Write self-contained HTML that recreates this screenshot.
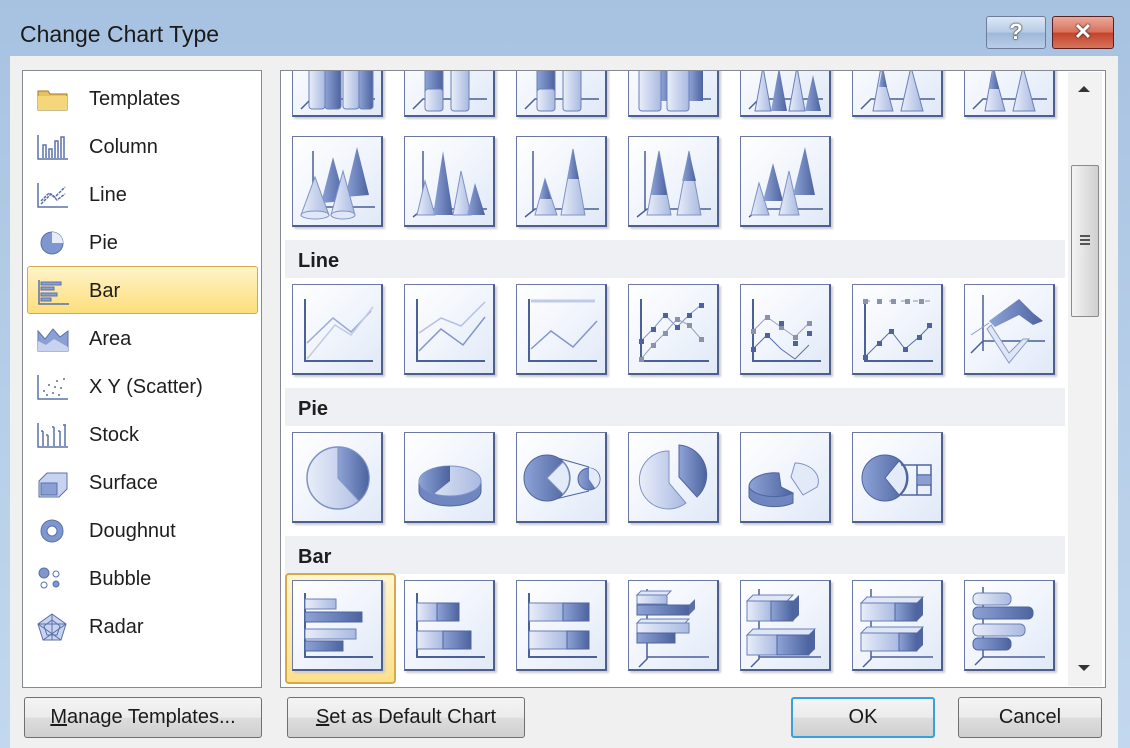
<!DOCTYPE html>
<html><head><meta charset="utf-8">
<style>
*{margin:0;padding:0;box-sizing:border-box}
body{width:1130px;height:748px;overflow:hidden;background:linear-gradient(#a7c2e1,#c3d8ee);font-family:"Liberation Sans",sans-serif;position:relative}
.abs{position:absolute}
#title{left:20px;top:21px;font-size:23px;color:#1a1a1a}
#body{left:10px;top:56px;width:1108px;height:692px;background:#f0f0f0}
#list{left:22px;top:70px;width:240px;height:618px;background:#fff;border:1px solid #858a92}
.it{position:absolute;left:4px;width:231px;height:48px;font-size:20px;color:#1e1e1e}
.it span{position:absolute;left:62px;top:14px}
.it svg{position:absolute;left:8px;top:9px}
.sel{background:linear-gradient(#fff4c8,#fdde7c);border:1px solid #d6aa4a;border-radius:3px}
.sel span{left:61px;top:13px}
#pane{left:280px;top:70px;width:826px;height:618px;background:#fff;border:1px solid #858a92;overflow:hidden}
.t{position:absolute;width:91px;height:91px;border:1px solid #6a78a3;border-right:2px solid #4e5e8e;border-bottom:2px solid #4e5e8e;background:linear-gradient(135deg,#fff 0%,#f1f5fc 50%,#e0e9f8 100%);box-shadow:2px 2px 2px #c9ccd2}
.t svg{position:absolute;left:0;top:0}
.hd{position:absolute;left:5px;width:780px;height:38px;background:#eef0f3;font-weight:bold;font-size:20px;color:#1e1e1e;padding:10px 0 0 13px}
.btn{position:absolute;height:41px;border:1px solid #707070;border-radius:3px;background:linear-gradient(#f4f4f4 0%,#ebebeb 50%,#dddddd 51%,#cfcfcf 100%);font-size:20px;color:#1a1a1a;text-align:center;line-height:38px}
#sb{left:1068px;top:72px;width:34px;height:614px;background:#f2f2f2}
</style></head><body>
<div class="abs" id="title">Change Chart Type</div>
<div class="abs" style="left:986px;top:16px;width:60px;height:33px;border:1px solid #6d7d99;border-radius:3px;background:linear-gradient(#dbe7f5,#b6cbe6 50%,#9fb7d8 51%,#b9cde8);color:#fff;font-weight:bold;font-size:22px;text-align:center;line-height:30px;text-shadow:0 0 2px #222,0 0 1px #222">?</div>
<div class="abs" style="left:1052px;top:16px;width:62px;height:33px;border:1px solid #5a2020;border-radius:3px;background:linear-gradient(#e9a99a,#d8705a 50%,#c3422a 51%,#d6745c);color:#fff;font-weight:bold;font-size:22px;text-align:center;line-height:30px;text-shadow:0 0 2px #222,0 0 1px #222">✕</div>
<div class="abs" id="body"></div>

<div class="abs" id="list">
<div class="it" style="top:3px"><svg width="34" height="32"><path d="M3 8h10l2 3h17v16H3z" fill="#e8c35c" stroke="#9a7a2a"/><path d="M3 13h29v14H3z" fill="#f4d77a"/></svg><span>Templates</span></div>
<div class="it" style="top:51px"><svg width="34" height="32" fill="none" stroke="#5a70a8" stroke-width="1.5"><path d="M3 4v24h30"/><path d="M8 27V14h3v13M14 27V18h3v9M20 27V10h3v17M26 27V6h3v21"/></svg><span>Column</span></div>
<div class="it" style="top:99px"><svg width="34" height="32" fill="none" stroke="#5a70a8" stroke-width="1.5"><path d="M3 4v24h30"/><path d="M6 22l8-8 6 4 10-10M6 25l10-10 6 6 8-6" stroke-dasharray="3 1"/></svg><span>Line</span></div>
<div class="it" style="top:147px"><svg width="34" height="32"><circle cx="17" cy="16" r="11" fill="#7f97cf" stroke="#5a70a8"/><path d="M17 16V5a11 11 0 0 1 11 11z" fill="#e6ecf8"/></svg><span>Pie</span></div>
<div class="it sel" style="top:195px"><svg width="34" height="32" fill="#8aa0d4" stroke="#5a70a8"><path d="M3 4v24h30" fill="none" stroke-width="1.5"/><rect x="5" y="6" width="20" height="3"/><rect x="5" y="11" width="13" height="3"/><rect x="5" y="17" width="16" height="3"/><rect x="5" y="22" width="10" height="3"/></svg><span>Bar</span></div>
<div class="it" style="top:243px"><svg width="34" height="32"><path d="M3 28V8l7 8 8-10 7 8 8-6v20z" fill="#8aa0d4" stroke="#5a70a8"/><path d="M3 28V18l8 4 8-6 14 8v4z" fill="#c8d4ef"/></svg><span>Area</span></div>
<div class="it" style="top:291px"><svg width="34" height="32" fill="#5a70a8"><path d="M3 4v24h30" fill="none" stroke="#5a70a8" stroke-width="1.5"/><circle cx="9" cy="20" r="1"/><circle cx="14" cy="14" r="1"/><circle cx="18" cy="22" r="1"/><circle cx="22" cy="10" r="1"/><circle cx="26" cy="17" r="1"/><circle cx="29" cy="8" r="1"/><circle cx="12" cy="24" r="1"/><circle cx="24" cy="24" r="1"/><circle cx="20" cy="16" r="1"/></svg><span>X Y (Scatter)</span></div>
<div class="it" style="top:339px"><svg width="34" height="32" fill="none" stroke="#5a70a8" stroke-width="1.5"><path d="M3 4v24h30"/><path d="M8 27V12M13 27V16M19 27V8M25 27V12M30 27V6M6 12h2M11 16h2M17 8h2M23 12h2M28 6h3"/></svg><span>Stock</span></div>
<div class="it" style="top:387px"><svg width="34" height="32"><path d="M4 14l8-8h20v16l-8 8H4z" fill="#c8d4ef" stroke="#5a70a8"/><path d="M6 16h16v12H6z" fill="#8aa0d4" stroke="#5a70a8"/></svg><span>Surface</span></div>
<div class="it" style="top:435px"><svg width="34" height="32"><circle cx="17" cy="16" r="11" fill="#7f97cf" stroke="#5a70a8"/><circle cx="17" cy="16" r="5" fill="#fff" stroke="#5a70a8"/></svg><span>Doughnut</span></div>
<div class="it" style="top:483px"><svg width="34" height="32" fill="#7f97cf" stroke="#5a70a8"><circle cx="9" cy="10" r="5"/><circle cx="21" cy="11" r="3" fill="#fff"/><circle cx="9" cy="22" r="3" fill="#fff"/><circle cx="21" cy="21" r="3"/></svg><span>Bubble</span></div>
<div class="it" style="top:531px"><svg width="34" height="32" fill="none" stroke="#5a70a8"><path d="M17 3l14 10-5 16H8L3 13z" fill="#c8d4ef"/><path d="M17 9l8 6-3 9h-10l-3-9z"/><path d="M17 3v26M3 13l28 0M8 29l23-16M26 29L3 13"/></svg><span>Radar</span></div>
</div>

<div class="abs" id="pane">
<svg width="0" height="0" style="position:absolute"><defs>
<linearGradient id="g1" x1="0" x2="1"><stop offset="0" stop-color="#e9eef9"/><stop offset="1" stop-color="#a9b9e0"/></linearGradient>
<linearGradient id="g2" x1="0" x2="1"><stop offset="0" stop-color="#8ea3d6"/><stop offset="1" stop-color="#4c639f"/></linearGradient>
</defs></svg>
<div class="t" style="left:11px;top:-45px"><svg width="90" height="90"><path d="M8 82l10-10h64" stroke="#4b5f98" fill="none" stroke-width="1.5"/><rect x="16" y="40" width="16" height="42" rx="3" fill="url(#g1)" stroke="#6a7fb8"/><rect x="32" y="40" width="16" height="42" rx="3" fill="url(#g2)" stroke="#6a7fb8"/><rect x="50" y="40" width="16" height="42" rx="3" fill="url(#g1)" stroke="#6a7fb8"/><rect x="66" y="40" width="14" height="42" rx="3" fill="url(#g2)" stroke="#6a7fb8"/></svg></div>
<div class="t" style="left:123px;top:-45px"><svg width="90" height="90"><path d="M8 82l10-10h64" stroke="#4b5f98" fill="none" stroke-width="1.5"/><rect x="20" y="40" width="18" height="25" fill="url(#g2)" stroke="#6a7fb8"/><rect x="20" y="62" width="18" height="22" rx="3" fill="url(#g1)" stroke="#6a7fb8"/><rect x="46" y="40" width="18" height="44" rx="3" fill="url(#g1)" stroke="#6a7fb8"/></svg></div>
<div class="t" style="left:235px;top:-45px"><svg width="90" height="90"><path d="M8 82l10-10h64" stroke="#4b5f98" fill="none" stroke-width="1.5"/><rect x="20" y="40" width="18" height="25" fill="url(#g2)" stroke="#6a7fb8"/><rect x="20" y="62" width="18" height="22" rx="3" fill="url(#g1)" stroke="#6a7fb8"/><rect x="46" y="40" width="18" height="44" rx="3" fill="url(#g1)" stroke="#6a7fb8"/></svg></div>
<div class="t" style="left:347px;top:-45px"><svg width="90" height="90"><path d="M18 72h64" stroke="#4b5f98" stroke-width="1.5"/><rect x="32" y="40" width="14" height="34" fill="url(#g2)"/><rect x="60" y="40" width="14" height="34" fill="url(#g2)"/><rect x="10" y="40" width="22" height="44" rx="3" fill="url(#g1)" stroke="#6a7fb8"/><rect x="38" y="40" width="22" height="44" rx="3" fill="url(#g1)" stroke="#6a7fb8"/></svg></div>
<div class="t" style="left:459px;top:-45px"><svg width="90" height="90"><path d="M8 82l10-10h64" stroke="#4b5f98" fill="none" stroke-width="1.5"/><path d="M14 84l8-44 8 44z" fill="url(#g1)" stroke="#6a7fb8"/><path d="M30 84l8-44 8 44z" fill="url(#g2)"/><path d="M48 84l8-44 8 44z" fill="url(#g1)" stroke="#6a7fb8"/><path d="M64 84l8-36 8 36z" fill="url(#g2)"/></svg></div>
<div class="t" style="left:571px;top:-45px"><svg width="90" height="90"><path d="M8 82l10-10h64" stroke="#4b5f98" fill="none" stroke-width="1.5"/><path d="M20 84l8-44 12 44z" fill="url(#g1)" stroke="#6a7fb8"/><path d="M26 60l4-20 4 20z" fill="url(#g2)"/><path d="M48 84l10-44 12 44z" fill="url(#g1)" stroke="#6a7fb8"/></svg></div>
<div class="t" style="left:683px;top:-45px"><svg width="90" height="90"><path d="M8 82l10-10h64" stroke="#4b5f98" fill="none" stroke-width="1.5"/><path d="M20 84l8-44 12 44z" fill="url(#g1)" stroke="#6a7fb8"/><path d="M24 62l5-22 5 22z" fill="url(#g2)"/><path d="M48 84l10-44 12 44z" fill="url(#g1)" stroke="#6a7fb8"/></svg></div>
<div class="t" style="left:11px;top:65px"><svg width="90" height="90"><path d="M20 14v60M8 78l10-8h64" stroke="#4b5f98" fill="none" stroke-width="1.5"/><path d="M28 66l12-46 12 44z" fill="url(#g2)"/><path d="M52 60l12-50 12 48z" fill="url(#g2)"/><path d="M8 78l14-38 14 38z" fill="url(#g1)" stroke="#7f92c4"/><ellipse cx="22" cy="78" rx="14" ry="4" fill="#e0e8f7" stroke="#7f92c4"/><path d="M38 78l12-44 12 44z" fill="url(#g1)" stroke="#7f92c4"/><ellipse cx="50" cy="78" rx="12" ry="4" fill="#e0e8f7" stroke="#7f92c4"/></svg></div>
<div class="t" style="left:123px;top:65px"><svg width="90" height="90"><path d="M18 14v60M8 80l10-8h64" stroke="#4b5f98" fill="none" stroke-width="1.5"/><path d="M12 78l8-34 10 34z" fill="url(#g1)" stroke="#7f92c4"/><path d="M28 78l10-64 10 64z" fill="url(#g2)"/><path d="M48 78l8-44 10 44z" fill="url(#g1)" stroke="#7f92c4"/><path d="M62 78l8-32 10 32z" fill="url(#g2)"/></svg></div>
<div class="t" style="left:235px;top:65px"><svg width="90" height="90"><path d="M16 14v60M8 80l10-8h64" stroke="#4b5f98" fill="none" stroke-width="1.5"/><path d="M18 78l10-36 12 36z" fill="url(#g1)" stroke="#7f92c4"/><path d="M23 62l5-20 6 20z" fill="url(#g2)"/><path d="M44 78l12-66 12 66z" fill="url(#g1)" stroke="#7f92c4"/><path d="M50 42l6-30 6 30z" fill="url(#g2)"/></svg></div>
<div class="t" style="left:347px;top:65px"><svg width="90" height="90"><path d="M16 14v60M8 80l10-8h64" stroke="#4b5f98" fill="none" stroke-width="1.5"/><path d="M18 78l12-64 12 64z" fill="url(#g1)" stroke="#7f92c4"/><path d="M22 58l8-44 8 44z" fill="url(#g2)"/><path d="M48 78l12-64 12 64z" fill="url(#g1)" stroke="#7f92c4"/><path d="M53 44l7-30 7 30z" fill="url(#g2)"/></svg></div>
<div class="t" style="left:459px;top:65px"><svg width="90" height="90"><path d="M8 80l10-8h64" stroke="#4b5f98" fill="none" stroke-width="1.5"/><path d="M10 78l8-32 10 32z" fill="url(#g1)" stroke="#7f92c4"/><path d="M22 64l10-38 10 38z" fill="url(#g2)"/><path d="M38 78l10-44 10 44z" fill="url(#g1)" stroke="#7f92c4"/><path d="M52 58l12-48 10 48z" fill="url(#g2)"/></svg></div>
</div>
<div class="abs" style="left:280px;top:70px;width:826px;height:618px;overflow:hidden;pointer-events:none">
<div class="hd" style="top:170px">Line</div>
<div class="hd" style="top:318px">Pie</div>
<div class="hd" style="top:466px">Bar</div>
<div class="t" style="left:12px;top:214px"><svg width="90" height="90" fill="none"><path d="M12 14v62h68" stroke="#4b5f98" stroke-width="2"/><path d="M14 58l26-25 18 14 20-21" stroke="#9aaad4" stroke-width="1.5"/><path d="M14 74l28-34 16 10 22-28" stroke="#c1cbe6" stroke-width="1.5"/></svg></div>
<div class="t" style="left:124px;top:214px"><svg width="90" height="90" fill="none"><path d="M12 14v62h68" stroke="#4b5f98" stroke-width="2"/><path d="M14 48l22-15 20 8 24-24" stroke="#b4c0e0" stroke-width="1.5"/><path d="M14 66l22-22 22 16 22-28" stroke="#8296cc" stroke-width="1.5"/></svg></div>
<div class="t" style="left:236px;top:214px"><svg width="90" height="90" fill="none"><path d="M12 14v62h68" stroke="#4b5f98" stroke-width="2"/><path d="M14 16h64" stroke="#c1cbe6" stroke-width="3"/><path d="M14 64l20-18 22 16 24-26" stroke="#8296cc" stroke-width="1.5"/></svg></div>
<div class="t" style="left:348px;top:214px"><svg width="90" height="90"><path d="M12 14v62h68" stroke="#4b5f98" stroke-width="2" fill="none"/><path d="M12 56l12-12 12-14 12 12 12-12 12-10" stroke="#8296cc" fill="none"/><path d="M12 74l12-14 12-12 12-14 12 6 12 14" stroke="#9aa3b8" fill="none"/><g fill="#4d63a0"><rect x="10" y="54" width="5" height="5"/><rect x="22" y="42" width="5" height="5"/><rect x="34" y="28" width="5" height="5"/><rect x="46" y="40" width="5" height="5"/><rect x="58" y="28" width="5" height="5"/><rect x="70" y="18" width="5" height="5"/></g><g fill="#8a93a8"><rect x="10" y="72" width="5" height="5"/><rect x="22" y="58" width="5" height="5"/><rect x="34" y="46" width="5" height="5"/><rect x="46" y="32" width="5" height="5"/><rect x="58" y="38" width="5" height="5"/><rect x="70" y="52" width="5" height="5"/></g></svg></div>
<div class="t" style="left:460px;top:214px"><svg width="90" height="90"><path d="M12 14v62h68" stroke="#4b5f98" stroke-width="2" fill="none"/><path d="M12 46l14-14 14 10 14 10 14-14" stroke="#9aa3b8" fill="none"/><path d="M12 64l14-14 14 14 14 10 14-14" stroke="#5a6fa8" fill="none"/><g fill="#8a93a8"><rect x="10" y="44" width="5" height="5"/><rect x="24" y="30" width="5" height="5"/><rect x="38" y="40" width="5" height="5"/><rect x="52" y="50" width="5" height="5"/><rect x="66" y="36" width="5" height="5"/></g><g fill="#4d63a0"><rect x="10" y="62" width="5" height="5"/><rect x="24" y="48" width="5" height="5"/><rect x="38" y="36" width="5" height="5"/><rect x="52" y="56" width="5" height="5"/><rect x="66" y="46" width="5" height="5"/></g></svg></div>
<div class="t" style="left:572px;top:214px"><svg width="90" height="90"><path d="M12 14v62h68" stroke="#4b5f98" stroke-width="2" fill="none"/><path d="M12 16h68" stroke="#8a93a8" stroke-dasharray="5 7"/><g fill="#8a93a8"><rect x="10" y="14" width="5" height="5"/><rect x="24" y="14" width="5" height="5"/><rect x="38" y="14" width="5" height="5"/><rect x="52" y="14" width="5" height="5"/><rect x="66" y="14" width="5" height="5"/></g><path d="M12 72l14-14 12-12 14 18 14-12 12-12" stroke="#5a6fa8" fill="none"/><g fill="#4d63a0"><rect x="10" y="70" width="5" height="5"/><rect x="24" y="56" width="5" height="5"/><rect x="36" y="44" width="5" height="5"/><rect x="50" y="62" width="5" height="5"/><rect x="64" y="50" width="5" height="5"/><rect x="74" y="38" width="5" height="5"/></g></svg></div>
<div class="t" style="left:684px;top:214px"><svg width="90" height="90"><path d="M18 10v56M6 68l12-12h62" stroke="#4b5f98" fill="none" stroke-width="1.5"/><path d="M24 36l30-22 14 14 10 8-10 4-14-10-24 12z" fill="url(#g2)"/><path d="M22 44l22 34 20-24-6 0-14 14-18-28z" fill="#dfe6f6" stroke="#8a9bc8"/><path d="M6 50l18-12" stroke="#8a9bc8"/></svg></div>
<div class="t" style="left:12px;top:362px"><svg width="90" height="90"><circle cx="45" cy="45" r="31" fill="url(#g1)" stroke="#7f92c4" stroke-width="1.5"/><path d="M45 45V14a31 31 0 0 1 21 54z" fill="url(#g2)" stroke="#7f92c4"/></svg></div>
<div class="t" style="left:124px;top:362px"><svg width="90" height="90"><path d="M14 48v10a31 15 0 0 0 62 0V48" fill="#6f86c0" stroke="#4f65a0"/><ellipse cx="45" cy="48" rx="31" ry="15" fill="url(#g1)" stroke="#7f92c4"/><path d="M45 48V33a31 15 0 0 0-31 15 31 15 0 0 0 15 13z" fill="url(#g2)"/></svg></div>
<div class="t" style="left:236px;top:362px"><svg width="90" height="90"><path d="M30 22L72 34M30 68L72 58" stroke="#4f65a0" fill="none"/><circle cx="30" cy="45" r="23" fill="url(#g2)" stroke="#4f65a0"/><path d="M30 45l16-16a23 23 0 0 1 0 32z" fill="#e4ebf8" stroke="#7f92c4"/><circle cx="72" cy="46" r="11" fill="url(#g2)" stroke="#4f65a0"/><path d="M72 46V35a11 11 0 0 1 6 20z" fill="#e4ebf8"/></svg></div>
<div class="t" style="left:348px;top:362px"><svg width="90" height="90"><path d="M40 50V18a29 29 0 1 0 17 52z" fill="url(#g1)" stroke="#7f92c4"/><path d="M50 44V12a30 30 0 0 1 18 52z" fill="url(#g2)" stroke="#4f65a0"/></svg></div>
<div class="t" style="left:460px;top:362px"><svg width="90" height="90"><path d="M8 54v10a26 12 0 0 0 44 6V60" fill="#6f86c0" stroke="#4f65a0"/><path d="M40 54L38 40a26 14 0 0 0-30 14 26 12 0 0 0 44 6z" fill="url(#g2)" stroke="#4f65a0"/><path d="M50 44l4-14a24 18 0 0 1 22 24l-14 8z" fill="#e2e9f7" stroke="#7f92c4"/></svg></div>
<div class="t" style="left:572px;top:362px"><svg width="90" height="90"><circle cx="32" cy="45" r="23" fill="url(#g2)" stroke="#4f65a0"/><path d="M32 45l14-17a23 23 0 0 1 0 34z" fill="#e4ebf8" stroke="#4f65a0"/><path d="M48 32h30v30H48M64 32v30M64 42h14M64 52h14" fill="none" stroke="#4f65a0" stroke-width="1.5"/><rect x="65" y="43" width="12" height="8" fill="#8a9fd2"/></svg></div>
<div class="abs" style="left:5px;top:503px;width:111px;height:111px;border:2px solid #d6aa4a;border-radius:4px;background:linear-gradient(#fff6cf,#fde08c);"></div>
<div class="t" style="left:12px;top:510px"><svg width="90" height="90"><path d="M12 12v64h68" stroke="#4b5f98" stroke-width="2" fill="none"/><rect x="12" y="18" width="31" height="10" fill="url(#g1)" stroke="#6a7fb8"/><rect x="12" y="31" width="57" height="10" fill="url(#g2)" stroke="#4f65a0"/><rect x="12" y="48" width="51" height="10" fill="url(#g1)" stroke="#6a7fb8"/><rect x="12" y="60" width="38" height="10" fill="url(#g2)" stroke="#4f65a0"/></svg></div>
<div class="t" style="left:124px;top:510px"><svg width="90" height="90"><path d="M12 12v64h68" stroke="#4b5f98" stroke-width="2" fill="none"/><rect x="12" y="22" width="20" height="18" fill="url(#g1)" stroke="#6a7fb8"/><rect x="32" y="22" width="22" height="18" fill="url(#g2)" stroke="#4f65a0"/><rect x="12" y="50" width="26" height="18" fill="url(#g1)" stroke="#6a7fb8"/><rect x="38" y="50" width="28" height="18" fill="url(#g2)" stroke="#4f65a0"/></svg></div>
<div class="t" style="left:236px;top:510px"><svg width="90" height="90"><path d="M12 12v64h68" stroke="#4b5f98" stroke-width="2" fill="none"/><rect x="12" y="22" width="34" height="18" fill="url(#g1)" stroke="#6a7fb8"/><rect x="46" y="22" width="26" height="18" fill="url(#g2)" stroke="#4f65a0"/><rect x="12" y="50" width="38" height="18" fill="url(#g1)" stroke="#6a7fb8"/><rect x="50" y="50" width="22" height="18" fill="url(#g2)" stroke="#4f65a0"/></svg></div>
<div class="t" style="left:348px;top:510px"><svg width="90" height="90"><path d="M18 8v70l-8 8M18 76h62" stroke="#4b5f98" stroke-width="1.5" fill="none"/><path d="M8 14l4-4h30l-4 4z" fill="#dfe6f6" stroke="#6a7fb8"/><rect x="8" y="14" width="30" height="9" fill="url(#g1)" stroke="#6a7fb8"/><rect x="8" y="24" width="52" height="10" fill="url(#g2)" stroke="#4f65a0"/><path d="M60 24l6-6v10l-6 6z" fill="#5a6fa8"/><path d="M8 42l4-4h48l-4 4z" fill="#dfe6f6" stroke="#6a7fb8"/><rect x="8" y="42" width="52" height="10" fill="url(#g1)" stroke="#6a7fb8"/><rect x="8" y="52" width="38" height="10" fill="url(#g2)" stroke="#4f65a0"/></svg></div>
<div class="t" style="left:460px;top:510px"><svg width="90" height="90"><path d="M18 8v70l-8 8M18 76h62" stroke="#4b5f98" stroke-width="1.5" fill="none"/><path d="M6 20l6-6h40l-6 6z" fill="#dfe6f6" stroke="#6a7fb8"/><rect x="6" y="20" width="24" height="20" fill="url(#g1)" stroke="#6a7fb8"/><rect x="30" y="20" width="22" height="20" fill="url(#g2)" stroke="#4f65a0"/><path d="M52 20l6-6v20l-6 6z" fill="#4f65a0"/><path d="M6 54l6-6h62l-6 6z" fill="#dfe6f6" stroke="#6a7fb8"/><rect x="6" y="54" width="30" height="20" fill="url(#g1)" stroke="#6a7fb8"/><rect x="36" y="54" width="32" height="20" fill="url(#g2)" stroke="#4f65a0"/><path d="M68 54l6-6v20l-6 6z" fill="#4f65a0"/></svg></div>
<div class="t" style="left:572px;top:510px"><svg width="90" height="90"><path d="M18 8v70l-8 8M18 76h62" stroke="#4b5f98" stroke-width="1.5" fill="none"/><path d="M8 22l6-6h56l-6 6z" fill="#dfe6f6" stroke="#6a7fb8"/><rect x="8" y="22" width="34" height="18" fill="url(#g1)" stroke="#6a7fb8"/><rect x="42" y="22" width="22" height="18" fill="url(#g2)" stroke="#4f65a0"/><path d="M64 22l6-6v18l-6 6z" fill="#4f65a0"/><path d="M8 52l6-6h56l-6 6z" fill="#dfe6f6" stroke="#6a7fb8"/><rect x="8" y="52" width="38" height="18" fill="url(#g1)" stroke="#6a7fb8"/><rect x="46" y="52" width="18" height="18" fill="url(#g2)" stroke="#4f65a0"/><path d="M64 52l6-6v18l-6 6z" fill="#4f65a0"/></svg></div>
<div class="t" style="left:684px;top:510px"><svg width="90" height="90"><path d="M18 6v70l-8 8M18 76h62" stroke="#4b5f98" stroke-width="1.5" fill="none"/><rect x="8" y="12" width="38" height="12" rx="5" fill="url(#g1)" stroke="#6a7fb8"/><rect x="8" y="26" width="60" height="12" rx="5" fill="url(#g2)" stroke="#4f65a0"/><rect x="8" y="43" width="52" height="12" rx="5" fill="url(#g1)" stroke="#6a7fb8"/><rect x="8" y="57" width="38" height="12" rx="5" fill="url(#g2)" stroke="#4f65a0"/></svg></div>
</div>

<div class="abs" id="sb">
<div class="abs" style="left:10px;top:14px;width:0;height:0;border-left:6px solid transparent;border-right:6px solid transparent;border-bottom:6px solid #333"></div>
<div class="abs" style="left:3px;top:93px;width:28px;height:152px;border:1px solid #8b8b8b;border-radius:2px;background:linear-gradient(90deg,#f4f4f4,#e2e2e2 50%,#cfcfcf)"></div>
<div class="abs" style="left:12px;top:163px;width:10px;height:2px;background:#555;box-shadow:0 4px 0 #555,0 8px 0 #555"></div>
<div class="abs" style="left:10px;top:593px;width:0;height:0;border-left:6px solid transparent;border-right:6px solid transparent;border-top:6px solid #333"></div>
</div>

<div class="btn" style="left:24px;top:697px;width:238px"><u>M</u>anage Templates...</div>
<div class="btn" style="left:287px;top:697px;width:238px"><u>S</u>et as Default Chart</div>
<div class="btn" style="left:791px;top:697px;width:144px;border:2px solid #3aa0dc;line-height:36px">OK</div>
<div class="btn" style="left:958px;top:697px;width:144px">Cancel</div>
</body></html>
